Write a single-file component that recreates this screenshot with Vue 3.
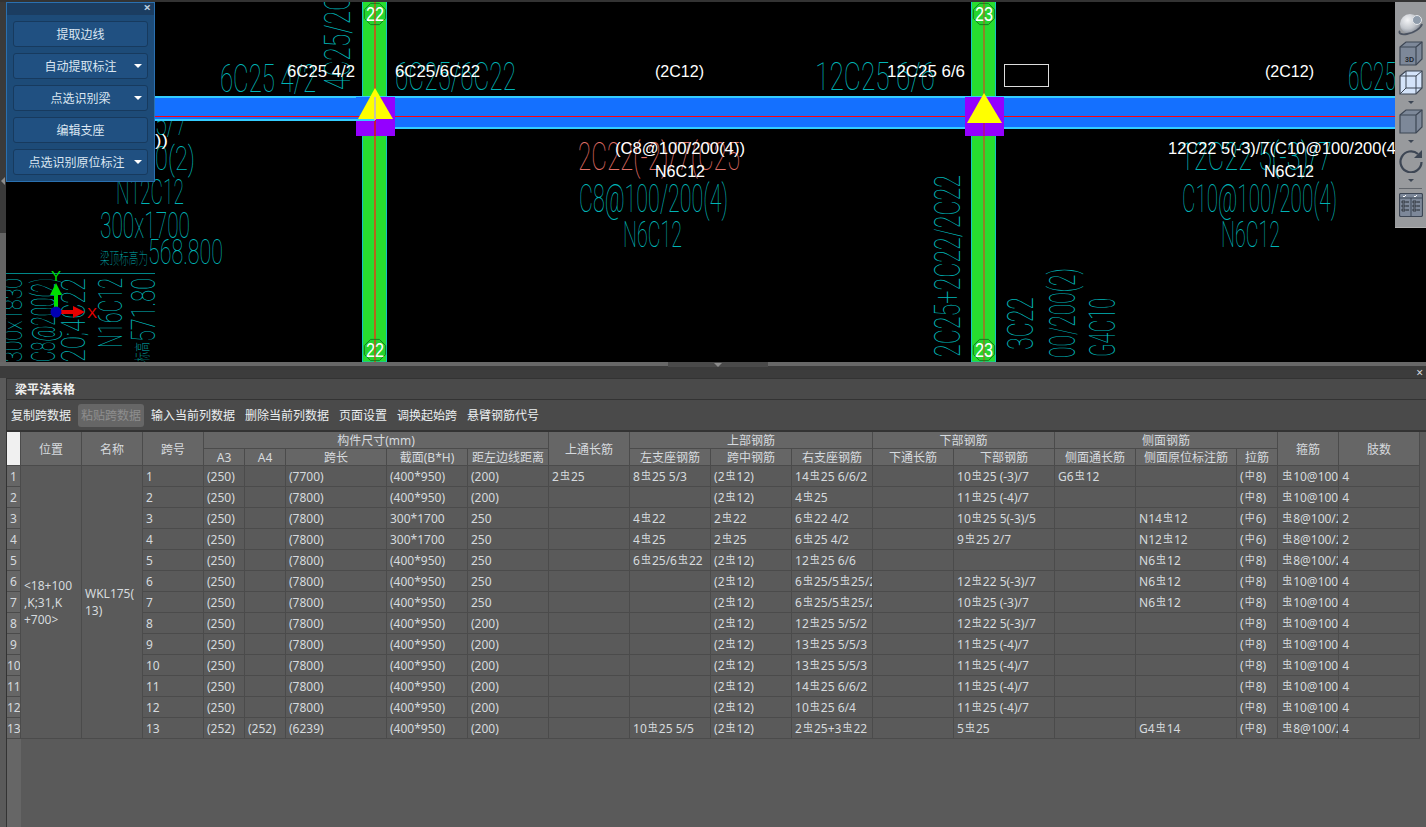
<template>
  <div class="app">
    <div class="view">
      <svg class="cad" width="1426" height="360" viewBox="0 2 1426 360">
        <defs>
          <radialGradient id="ball" cx="0.38" cy="0.3" r="0.8">
            <stop offset="0" stop-color="#f4f5f7" />
            <stop offset="0.55" stop-color="#c3c7cd" />
            <stop offset="1" stop-color="#6f7682" />
          </radialGradient>
        </defs>
        <rect x="6" y="2" width="1420" height="360" fill="#000" />

        <text
          v-for="(t, i) in tealText"
          :key="i"
          class="cad-text"
          :x="t.x"
          :y="t.y"
          :font-size="t.size"
          :textLength="t.len"
          lengthAdjust="spacingAndGlyphs"
          :fill="t.color || '#00b4b6'"
          :transform="t.rot ? `rotate(-90 ${t.x} ${t.y})` : null"
        >{{ t.s }}</text>
        <rect x="6" y="273" width="149" height="1" fill="#008688" />

        <!-- 柱 -->
        <g v-for="c in columns" :key="c.n">
          <rect :x="c.x - 12.5" y="1" width="24" height="361" fill="#27dd2f" stroke="#14c4c4" />
          <rect :x="c.x - c.lineW / 2" y="2" :width="c.lineW" height="360" :fill="c.line" />
        </g>

        <!-- 梁 -->
        <rect x="155" y="96" width="207" height="25" fill="#1470ff" />
        <rect x="388" y="96" width="584" height="33" fill="#1470ff" />
        <rect x="997" y="96" width="398" height="33" fill="#1470ff" />
        <rect x="155" y="96" width="1240" height="2" fill="#33ccff" />
        <rect x="155" y="119" width="207" height="2" fill="#33ccff" />
        <rect x="388" y="127" width="584" height="2" fill="#33ccff" />
        <rect x="997" y="127" width="398" height="2" fill="#33ccff" />
        <rect x="155" y="116" width="1240" height="1" fill="#ff0010" />

        <!-- 支座 -->
        <g v-for="c in columns" :key="'s' + c.n">
          <rect :x="c.x - 19" y="97" width="39" height="39" fill="#9400ff" />
          <rect :x="c.x - c.lineW / 2" y="119" :width="c.lineW" height="17" fill="#c01840" />
          <template v-if="c.n === 22">
            <rect :x="c.x - 19" y="97" width="19" height="22" fill="#1470ff" />
            <rect :x="c.x - 19" y="116" width="19" height="1" fill="#ff0010" />
            <rect :x="c.x - 19" y="119" width="19" height="2" fill="#33ccff" />
          </template>
          <polygon :points="`${c.x - 17},${c.base} ${c.x + 18},${c.base} ${c.x},${c.top}`" fill="#ffff00" />
          <rect v-if="c.n === 22" :x="c.x - 1" y="97" width="2" height="23" fill="#c4c4a8" />
        </g>

        <!-- 轴号 -->
        <g v-for="b in bubbles" :key="b.y + '-' + b.x">
          <polygon :points="hexagon(b.x, b.y)" fill="#1fb52a" fill-opacity="0.2" stroke="#14801e" />
          <text
            class="bubble"
            :x="b.x - 9"
            :y="b.y + 7"
            textLength="18"
            lengthAdjust="spacingAndGlyphs"
          >{{ b.n }}</text>
        </g>

        <text
          v-for="(t, i) in whiteText"
          :key="'w' + i"
          class="label"
          :x="t.x"
          :y="t.y"
          :textLength="t.len"
          lengthAdjust="spacingAndGlyphs"
        >{{ t.s }}</text>
        <rect x="1004.5" y="64.5" width="44" height="22" fill="none" stroke="#ddd" />

        <!-- 坐标轴 -->
        <rect x="54" y="292" width="4" height="20" fill="#00e000" />
        <polygon points="50,295 62,295 56,283" fill="#00e000" />
        <rect x="56" y="310" width="20" height="4" fill="#e80000" />
        <polygon points="73,306 73,318 85,312" fill="#e80000" />
        <circle cx="56" cy="312" r="5.5" fill="#0000b4" />
        <text class="axis" x="51" y="281" fill="#00e000">Y</text>
        <text class="axis" x="87" y="318" fill="#e80000">X</text>
      </svg>

      <div class="edge"><i></i></div>

      <div class="float-panel">
        <div class="float-title"><span class="float-close">×</span></div>
        <div class="float-body">
          <button v-for="b in panelButtons" :key="b.label" class="float-btn" :class="{ long: b.label.length > 6 }">
            <span>{{ b.label }}</span>
            <i v-if="b.drop" class="caret"></i>
          </button>
        </div>
      </div>

      <div class="view-tools">
        <svg class="tool" width="26" height="26" viewBox="0 0 26 26">
          <circle cx="12" cy="13" r="10" fill="url(#ball)" />
          <path d="M2 20c-2 2 1 4 7 3 7-1 14-6 15-10" fill="none" stroke="#4b5361" stroke-width="1.8" />
          <circle cx="19" cy="9" r="4.5" fill="#8f9cab" stroke="#e4e7eb" />
        </svg>
        <svg class="tool" width="26" height="26" viewBox="0 0 26 26">
          <path d="M2 7l6-5h16v17l-6 6H2z" fill="#7d8899" stroke="#3d4654" stroke-width="1.2" />
          <path d="M2 7h16v18M18 7l6-5" fill="none" stroke="#3d4654" stroke-width="1.2" />
          <text x="7" y="22" class="tool-3d">3D</text>
        </svg>
        <svg class="tool" width="26" height="26" viewBox="0 0 26 26">
          <path d="M2 7l6-5h16v17l-6 6H2z" fill="#d4e4fa" stroke="#3d4654" stroke-width="1.2" />
          <path d="M2 7h16v18M18 7l6-5M8 2v17h16M8 19l-6 6" fill="none" stroke="#3d4654" stroke-width="1" />
        </svg>
        <i class="tool-caret"></i>
        <svg class="tool" width="26" height="26" viewBox="0 0 26 26">
          <path d="M2 7l6-5h16v17l-6 6H2z" fill="#7d8899" stroke="#3d4654" stroke-width="1.2" />
          <path d="M2 7h16v18M18 7l6-5" fill="none" stroke="#3d4654" stroke-width="1.2" />
        </svg>
        <i class="tool-caret"></i>
        <svg class="tool" width="26" height="26" viewBox="0 0 26 26">
          <path d="M20 7A10.5 10.5 0 1 0 23.5 15" fill="none" stroke="#3d4654" stroke-width="2.2" />
          <path d="M24 3v8h-8z" fill="#3d4654" />
        </svg>
        <i class="tool-caret last"></i>
        <div class="tool-sep"></div>
        <svg class="tool" width="24" height="24" viewBox="0 0 24 24">
          <rect x="0.5" y="0.5" width="23" height="23" rx="1.5" fill="#7d8899" stroke="#3d4654" stroke-width="1.2" />
          <path d="M1 5h22M12 5v18" stroke="#3d4654" fill="none" />
          <path d="M4 3l1 1 2-2M15 3l1 1 2-2" stroke="#fff" fill="none" />
          <path d="M3 8h3v2H3zM3 12h3v2H3zM3 16h3v2H3zM14 8h3v2h-3zM14 12h3v2h-3zM14 16h3v2h-3z" fill="none" stroke="#23292f" stroke-width=".8" />
          <path d="M7 9h3M7 13h3M7 17h3M18 9h3M18 13h3M18 17h3" stroke="#23292f" />
        </svg>
      </div>
    </div>

    <div class="panel">
      <div class="splitter">
        <div class="grip"><i></i></div>
        <span class="panel-close">×</span>
      </div>
      <div class="title">梁平法表格</div>
      <div class="toolbar">
        <span
          v-for="a in actions"
          :key="a"
          class="action"
          :class="{ disabled: a === '粘贴跨数据' }"
        >{{ a }}</span>
      </div>

      <div class="table-wrap">
        <table class="grid">
          <colgroup>
            <col v-for="(w, i) in widths" :key="i" :style="{ width: w + 'px' }" />
          </colgroup>
          <thead>
            <tr>
              <th class="corner" rowspan="2"></th>
              <th rowspan="2">位置</th>
              <th rowspan="2">名称</th>
              <th rowspan="2">跨号</th>
              <th colspan="5">构件尺寸(mm)</th>
              <th rowspan="2">上通长筋</th>
              <th colspan="3">上部钢筋</th>
              <th colspan="2">下部钢筋</th>
              <th colspan="3">侧面钢筋</th>
              <th rowspan="2">箍筋</th>
              <th rowspan="2">肢数</th>
            </tr>
            <tr>
              <th v-for="h in subHeads" :key="h">{{ h }}</th>
            </tr>
          </thead>
          <tbody>
            <tr v-for="(row, r) in rows" :key="r">
              <td class="row-no">{{ r + 1 }}</td>
              <td v-if="r === 0" rowspan="13" class="pos">&lt;18+100<br />,K;31,K<br />+700&gt;</td>
              <td v-if="r === 0" rowspan="13" class="name">WKL175(<br />13)</td>
              <td v-for="(cell, c) in row" :key="c">
                <div class="cell">
                  <template v-for="(p, k) in parts(cell)" :key="k">
                    <span v-if="p === '虫' || p === '中'" class="bar">{{ p }}</span>
                    <template v-else>{{ p }}</template>
                  </template>
                </div>
              </td>
            </tr>
          </tbody>
        </table>
        <div class="row-rest"></div>
      </div>
    </div>
  </div>
</template>

<script setup>
const columns = [
  { n: 22, x: 375, top: 88, base: 119, line: "#b5651d", lineW: 2 },
  { n: 23, x: 984, top: 93, base: 123, line: "#f03020", lineW: 1 },
];

const bubbles = [
  { n: 22, x: 375, y: 14 },
  { n: 22, x: 375, y: 350 },
  { n: 23, x: 984, y: 14 },
  { n: 23, x: 984, y: 350 },
];

const hexagon = (x, y) => {
  const pts = [];
  for (let i = 0; i < 8; i++) {
    const a = (Math.PI / 4) * i + Math.PI / 8;
    pts.push(`${x + 11.5 * Math.cos(a)},${y + 11.5 * Math.sin(a)}`);
  }
  return pts.join(" ");
};

const salmon = "#e07068";

const tealText = [
  { s: "6C25 4/2", x: 220, y: 92, size: 38, len: 96 },
  { s: "6C25/6C22", x: 395, y: 90, size: 38, len: 121 },
  { s: "12C25 6/6", x: 815, y: 90, size: 38, len: 120 },
  { s: "6C25", x: 1348, y: 90, size: 38, len: 48 },
  { s: "5/7", x: 155, y: 135, size: 34, len: 32 },
  { s: "0(2)", x: 155, y: 170, size: 34, len: 40 },
  { s: "N12C12", x: 116, y: 204, size: 35, len: 68 },
  { s: "300x1700", x: 100, y: 238, size: 36, len: 90 },
  { s: "梁顶标高为", x: 100, y: 264, size: 16, len: 48 },
  { s: "568.800", x: 148, y: 264, size: 35, len: 75 },
  { s: "2C22(-2)/7(C25", x: 578, y: 170, size: 38, len: 162, color: salmon },
  { s: "C8@100/200(4)", x: 579, y: 212, size: 38, len: 149 },
  { s: "N6C12", x: 623, y: 247, size: 36, len: 59 },
  { s: "12C22 5(-3)/7", x: 1180, y: 170, size: 38, len: 152 },
  { s: "C10@100/200(4)", x: 1182, y: 212, size: 38, len: 155 },
  { s: "N6C12", x: 1221, y: 247, size: 36, len: 59 },
  { s: "4C25/2C", x: 350, y: 90, size: 36, len: 95, rot: true },
  { s: "2C25+2C22/2C22", x: 960, y: 357, size: 36, len: 182, rot: true },
  { s: "3C22", x: 1033, y: 350, size: 36, len: 53, rot: true },
  { s: "00/200(2)", x: 1075, y: 358, size: 36, len: 90, rot: true },
  { s: "G4C10", x: 1115, y: 357, size: 36, len: 59, rot: true },
  { s: "300x1830", x: 22, y: 362, size: 26, len: 84, rot: true },
  { s: "C8@200(2)", x: 55, y: 362, size: 34, len: 84, rot: true },
  { s: "20;4C22", x: 85, y: 362, size: 34, len: 84, rot: true },
  { s: "N16C12", x: 122, y: 348, size: 34, len: 70, rot: true },
  { s: "标高", x: 148, y: 362, size: 16, len: 20, rot: true },
  { s: "571.80", x: 155, y: 342, size: 34, len: 64, rot: true },
];

const whiteText = [
  { s: "6C25 4/2", x: 287, y: 77, len: 68 },
  { s: "6C25/6C22", x: 395, y: 77, len: 85 },
  { s: "(2C12)", x: 655, y: 77, len: 49 },
  { s: "12C25 6/6", x: 887, y: 77, len: 78 },
  { s: "(2C12)", x: 1265, y: 77, len: 49 },
  { s: "))", x: 155, y: 146, len: 13 },
  { s: "(C8@100/200(4))", x: 615, y: 154, len: 130 },
  { s: "N6C12", x: 655, y: 177, len: 50 },
  { s: "12C22 5(-3)/7(C10@100/200(4", x: 1168, y: 154, len: 228 },
  { s: "N6C12", x: 1264, y: 177, len: 50 },
];

const panelButtons = [
  { label: "提取边线" },
  { label: "自动提取标注", drop: true },
  { label: "点选识别梁", drop: true },
  { label: "编辑支座" },
  { label: "点选识别原位标注", drop: true },
];

const actions = [
  "复制跨数据",
  "粘贴跨数据",
  "输入当前列数据",
  "删除当前列数据",
  "页面设置",
  "调换起始跨",
  "悬臂钢筋代号",
];

const widths = [14, 61, 61, 61, 41, 41, 101, 81, 81, 81, 81, 81, 81, 81, 101, 81, 101, 41, 61, 81];

const subHeads = [
  "A3", "A4", "跨长", "截面(B*H)", "距左边线距离",
  "左支座钢筋", "跨中钢筋", "右支座钢筋",
  "下通长筋", "下部钢筋",
  "侧面通长筋", "侧面原位标注筋", "拉筋",
];

// 一行一跨，虫 / 中 是钢筋符号
const rows = [
  ["1", "(250)", "", "(7700)", "(400*950)", "(200)", "2虫25", "8虫25 5/3", "(2虫12)", "14虫25 6/6/2", "", "10虫25 (-3)/7", "G6虫12", "", "(中8)", "虫10@100/200(4)", "4"],
  ["2", "(250)", "", "(7800)", "(400*950)", "(200)", "", "", "(2虫12)", "4虫25", "", "11虫25 (-4)/7", "", "", "(中8)", "虫10@100/200(4)", "4"],
  ["3", "(250)", "", "(7800)", "300*1700", "250", "", "4虫22", "2虫22", "6虫22 4/2", "", "10虫25 5(-3)/5", "", "N14虫12", "(中6)", "虫8@100/200(2)", "2"],
  ["4", "(250)", "", "(7800)", "300*1700", "250", "", "4虫25", "2虫25", "6虫25 4/2", "", "9虫25 2/7", "", "N12虫12", "(中6)", "虫8@100/200(2)", "2"],
  ["5", "(250)", "", "(7800)", "(400*950)", "250", "", "6虫25/6虫22", "(2虫12)", "12虫25 6/6", "", "", "", "N6虫12", "(中8)", "虫8@100/200(4)", "4"],
  ["6", "(250)", "", "(7800)", "(400*950)", "250", "", "", "(2虫12)", "6虫25/5虫25/2", "", "12虫22 5(-3)/7", "", "N6虫12", "(中8)", "虫10@100/200(4)", "4"],
  ["7", "(250)", "", "(7800)", "(400*950)", "250", "", "", "(2虫12)", "6虫25/5虫25/2", "", "10虫25 (-3)/7", "", "N6虫12", "(中8)", "虫10@100/200(4)", "4"],
  ["8", "(250)", "", "(7800)", "(400*950)", "(200)", "", "", "(2虫12)", "12虫25 5/5/2", "", "12虫22 5(-3)/7", "", "", "(中8)", "虫10@100/200(4)", "4"],
  ["9", "(250)", "", "(7800)", "(400*950)", "(200)", "", "", "(2虫12)", "13虫25 5/5/3", "", "11虫25 (-4)/7", "", "", "(中8)", "虫10@100/200(4)", "4"],
  ["10", "(250)", "", "(7800)", "(400*950)", "(200)", "", "", "(2虫12)", "13虫25 5/5/3", "", "11虫25 (-4)/7", "", "", "(中8)", "虫10@100/200(4)", "4"],
  ["11", "(250)", "", "(7800)", "(400*950)", "(200)", "", "", "(2虫12)", "14虫25 6/6/2", "", "11虫25 (-4)/7", "", "", "(中8)", "虫10@100/200(4)", "4"],
  ["12", "(250)", "", "(7800)", "(400*950)", "(200)", "", "", "(2虫12)", "10虫25 6/4", "", "11虫25 (-4)/7", "", "", "(中8)", "虫10@100/200(4)", "4"],
  ["13", "(252)", "(252)", "(6239)", "(400*950)", "(200)", "", "10虫25 5/5", "(2虫12)", "2虫25+3虫22", "", "5虫25", "", "G4虫14", "(中8)", "虫8@100/200(4)", "4"],
];

const parts = (s) => s.split(/(虫|中)/).filter((p) => p !== "");
</script>

<style>
html,
body {
  margin: 0;
  background: #5a5a5a;
  overflow: hidden;
}
</style>

<style scoped>
.app {
  width: 1426px;
  height: 827px;
  display: flex;
  flex-direction: column;
  font-family: "Noto Sans", "Noto Sans CJK SC", sans-serif;
  font-size: 12px;
  color: #d6dade;
  overflow: hidden;
}

.view {
  position: relative;
  height: 362px;
  padding-top: 2px;
  box-sizing: border-box;
  background: #333;
  flex: none;
}

.cad {
  display: block;
}
.cad-text {
  font-family: "Roboto", "Noto Sans CJK SC", sans-serif;
  font-weight: 100;
}
.label {
  font-family: "Liberation Sans", sans-serif;
  font-size: 16px;
  fill: #fff;
}
.bubble {
  font-family: "Liberation Sans", sans-serif;
  font-size: 20px;
  fill: #fff;
}
.axis {
  font-family: "Liberation Sans", sans-serif;
  font-size: 15px;
}

.edge {
  position: absolute;
  left: 0;
  top: 2px;
  bottom: 0;
  width: 6px;
  background: linear-gradient(#3a3a3a 231px, #646464 231px);
}
.edge i {
  position: absolute;
  left: 1px;
  top: 175px;
  border-top: 4px solid transparent;
  border-bottom: 4px solid transparent;
  border-right: 4px solid #8c8c8c;
}

.float-panel {
  position: absolute;
  left: 6px;
  top: 2px;
  width: 149px;
  height: 180px;
  box-sizing: border-box;
  background: #1d4b78;
  border: 1px solid #2a70b0;
}
.float-title {
  height: 12px;
  background: #1b3d61;
  position: relative;
}
.float-close {
  position: absolute;
  right: 3px;
  top: -3px;
  font-size: 13px;
  line-height: 15px;
  font-weight: 700;
  color: #b9cbde;
}
.float-body {
  padding: 6px 6px;
  display: flex;
  flex-direction: column;
  gap: 6px;
}
.float-btn {
  height: 26px;
  width: 135px;
  padding: 0;
  position: relative;
  box-sizing: border-box;
  border: 1px solid #173a5e;
  border-radius: 3px;
  background: #205081;
  color: #dbe6f1;
  font: inherit;
  display: flex;
  align-items: center;
  justify-content: center;
}
.float-btn.long {
  padding-right: 8px;
}
.caret {
  position: absolute;
  right: 5px;
  top: 10px;
  border-left: 4px solid transparent;
  border-right: 4px solid transparent;
  border-top: 4px solid #fff;
}

.view-tools {
  position: absolute;
  right: 0;
  top: 2px;
  width: 31px;
  height: 226px;
  box-sizing: border-box;
  background: #989a9d;
  border-bottom: 1px solid #b0b0b0;
  display: flex;
  flex-direction: column;
  align-items: center;
  padding-top: 9px;
}
.tool {
  display: block;
  flex: none;
  margin-bottom: 3px;
}
.tool-3d {
  font-family: "Liberation Sans", sans-serif;
  font-size: 7px;
  font-weight: 700;
  fill: #23292f;
}
.tool-caret {
  border-left: 3px solid transparent;
  border-right: 3px solid transparent;
  border-top: 3px solid #3d4654;
  margin: 3px 0 4px;
}
.tool-caret.last {
  margin-bottom: 6px;
}
.tool-sep {
  width: 23px;
  height: 1px;
  background: #62666c;
  margin: 0 0 4px;
}

.panel {
  flex: 1;
  display: flex;
  flex-direction: column;
  background: #5a5a5a;
  padding-left: 6px;
  min-height: 0;
}
.splitter {
  height: 16px;
  margin-left: -6px;
  background: #3c3c3c;
  border-top: 4px solid #686868;
  box-sizing: border-box;
  position: relative;
  flex: none;
}
.grip {
  position: absolute;
  left: 668px;
  top: -4px;
  width: 100px;
  height: 5px;
  background: #4a4a4a;
}
.grip i {
  position: absolute;
  left: 46px;
  top: 1px;
  border-left: 4px solid transparent;
  border-right: 4px solid transparent;
  border-top: 4px solid #8c8c8c;
}
.panel-close {
  position: absolute;
  right: 3px;
  top: 1px;
  font-size: 12px;
  line-height: 12px;
  color: #d6dade;
}
.title {
  height: 22px;
  flex: none;
  box-sizing: border-box;
  background: #4a4a4a;
  border-left: 1px solid #333;
  border-top: 1px solid #333;
  border-bottom: 1px solid #333;
  padding-left: 8px;
  line-height: 22px;
  font-weight: 700;
  color: #efefef;
}
.toolbar {
  height: 32px;
  flex: none;
  box-sizing: border-box;
  background: #4a4a4a;
  border-left: 1px solid #333;
  border-bottom: 2px solid #333;
  padding: 1px 0 0 1px;
  display: flex;
  align-items: center;
  gap: 4px;
  color: #eceff1;
}
.action {
  padding: 0 3px;
  line-height: 23px;
  border-radius: 3px;
}
.action.disabled {
  background: #666;
  color: #8e8e8e;
}

.table-wrap {
  flex: 1;
  position: relative;
  border-left: 1px solid #333;
  min-height: 0;
}
.grid {
  border-collapse: separate;
  border-spacing: 0;
  table-layout: fixed;
  width: 1413px;
  position: relative;
}
.grid th,
.grid td {
  padding: 0;
  border-right: 1px solid #4b4b4b;
  border-bottom: 1px solid #4b4b4b;
  overflow: hidden;
}
.grid th {
  background: #666;
  height: 15px;
  padding-top: 1px;
  line-height: 15px;
  font-weight: 400;
  color: #d6dade;
  text-align: center;
  white-space: nowrap;
}
.grid th.corner {
  background: #f0f0f0;
}
.grid td {
  height: 20px;
  background: #5a5a5a;
}
.grid td.row-no {
  background: #666;
  text-align: center;
  white-space: nowrap;
}
.grid td.pos {
  padding-left: 3px;
  line-height: 17px;
}
.grid td.name {
  padding-left: 3px;
  line-height: 17px;
}
.cell {
  height: 19px;
  padding: 1px 0 0 3px;
  line-height: 20px;
  white-space: nowrap;
  overflow: hidden;
}
.bar {
  font-size: 10px;
  display: inline-block;
  width: 12px;
  text-align: center;
  vertical-align: 2px;
  line-height: 10px;
}
.row-rest {
  width: 14px;
  height: 89px;
  background: #666;
}
</style>
